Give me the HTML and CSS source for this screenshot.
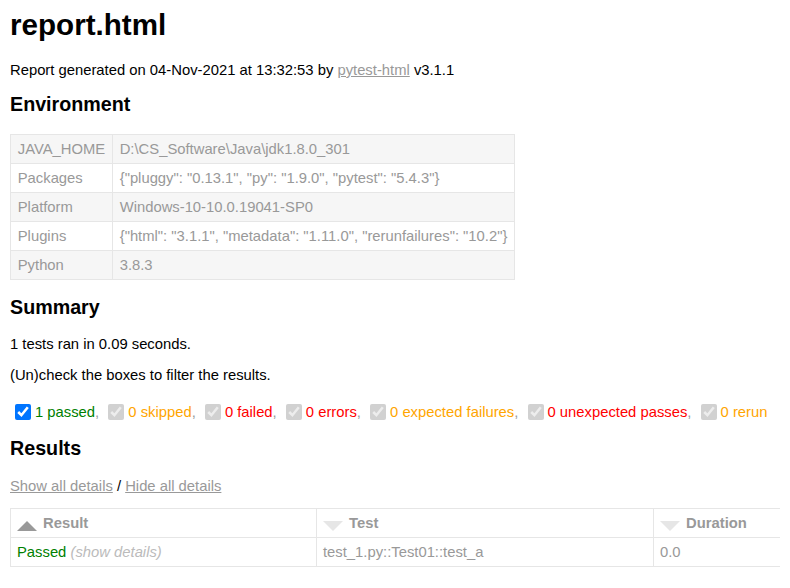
FILE: index.html
```html
<!DOCTYPE html>
<html>
<head>
<meta charset="utf-8">
<title>Test Report</title>
<link rel="stylesheet" href="styles.css">
</head>
<body>
<h1>report.html</h1>
<p class="text meta">Report generated on 04-Nov-2021 at 13:32:53 by <a class="link" href="#">pytest-html</a> v3.1.1</p>
<h2 class="sub">Environment</h2>
<table class="env">
  <tr><td>JAVA_HOME</td><td>D:\CS_Software\Java\jdk1.8.0_301</td></tr>
  <tr><td>Packages</td><td>{"pluggy": "0.13.1", "py": "1.9.0", "pytest": "5.4.3"}</td></tr>
  <tr><td>Platform</td><td>Windows-10-10.0.19041-SP0</td></tr>
  <tr><td>Plugins</td><td>{"html": "3.1.1", "metadata": "1.11.0", "rerunfailures": "10.2"}</td></tr>
  <tr><td>Python</td><td>3.8.3</td></tr>
</table>
<h2 class="sub summary">Summary</h2>
<p class="text ran">1 tests ran in 0.09 seconds. </p>
<p class="text filter">(Un)check the boxes to filter the results.</p>
<div class="filters"><input class="cb" type="checkbox" checked><span class="passed">1 passed</span>, <input class="cb" type="checkbox" checked disabled><span class="orange">0 skipped</span>, <input class="cb" type="checkbox" checked disabled><span class="red">0 failed</span>, <input class="cb" type="checkbox" checked disabled><span class="red">0 errors</span>, <input class="cb" type="checkbox" checked disabled><span class="orange">0 expected failures</span>, <input class="cb" type="checkbox" checked disabled><span class="red">0 unexpected passes</span>, <input class="cb" type="checkbox" checked disabled><span class="orange">0 rerun</span></div>
<h2 class="sub results-title">Results</h2>
<p class="text expanders"><a class="link" href="#">Show all details</a> / <a class="link" href="#">Hide all details</a></p>
<div class="results-wrap">
<table class="results">
  <colgroup><col class="c1"><col class="c2"><col class="c3"><col class="c4"></colgroup>
  <thead>
    <tr>
      <th><span class="sort-icon asc"></span>Result</th>
      <th><span class="sort-icon inactive"></span>Test</th>
      <th><span class="sort-icon inactive"></span>Duration</th>
      <th>Links</th>
    </tr>
  </thead>
  <tbody>
    <tr>
      <td><span class="passed">Passed</span> <span class="expander">(show details)</span></td>
      <td>test_1.py::Test01::test_a</td>
      <td>0.0</td>
      <td></td>
    </tr>
  </tbody>
</table>
</div>
</body>
</html>
```
FILE: styles.css
```css
html {
  overflow: hidden;
}
body {
  margin: 0;
  padding: 8px 10px 0;
  font-family: "Liberation Sans", Arial, Helvetica, sans-serif;
  font-size: 14.8px;
  line-height: 17px;
  color: #999;
  background: #fff;
}
h1 {
  font-size: 29.6px;
  line-height: 34px;
  margin: 0 0 20px;
  color: #000;
}
.sub {
  font-size: 19.7px;
  line-height: 23px;
  color: #000;
  margin: 0 0 18px;
}
.text {
  color: #000;
  margin: 0 0 15px;
}
.meta {
  margin-bottom: 14px;
}
.link {
  color: #999;
}
.env {
  border-collapse: collapse;
  border: 1px solid #e6e6e6;
}
.env td {
  border: 1px solid #e6e6e6;
  padding: 6px 6.75px;
  line-height: 16px;
  white-space: nowrap;
}
.env tr:nth-child(odd) {
  background: #f6f6f6;
}
.summary {
  margin-top: 16px;
  margin-bottom: 17px;
}
.ran {
  margin-bottom: 14px;
}
.filter {
  margin-bottom: 16px;
}
.filters {
  white-space: nowrap;
}
.cb {
  width: 16px;
  height: 16px;
  margin: 4px 4px 4px 5px;
  vertical-align: -3px;
}
.passed { color: green; }
.orange { color: orange; }
.red { color: red; }
.results-title {
  margin-top: 13px;
  margin-bottom: 18px;
}
.expanders {
  margin-bottom: 13px;
}
.results-wrap {
  overflow: hidden;
}
table.results {
  border-collapse: collapse;
  table-layout: fixed;
  width: 1480px;
  border: 1px solid #e6e6e6;
}
.c1 { width: 306px; }
.c2 { width: 337px; }
.c3 { width: 300px; }
table.results th,
table.results td {
  border: 1px solid #e6e6e6;
  padding: 6px;
  line-height: 16px;
  text-align: left;
  white-space: nowrap;
  overflow: hidden;
}
table.results th {
  font-weight: bold;
}
.sort-icon {
  float: left;
  width: 0;
  height: 0;
  margin-top: 6px;
  margin-right: 6px;
  border-left: 10px solid transparent;
  border-right: 10px solid transparent;
}
.sort-icon.asc {
  border-bottom: 10px solid #999;
}
.sort-icon.inactive {
  border-top: 10px solid #e6e6e6;
}
.expander {
  color: #bbb;
  font-style: italic;
}
```
